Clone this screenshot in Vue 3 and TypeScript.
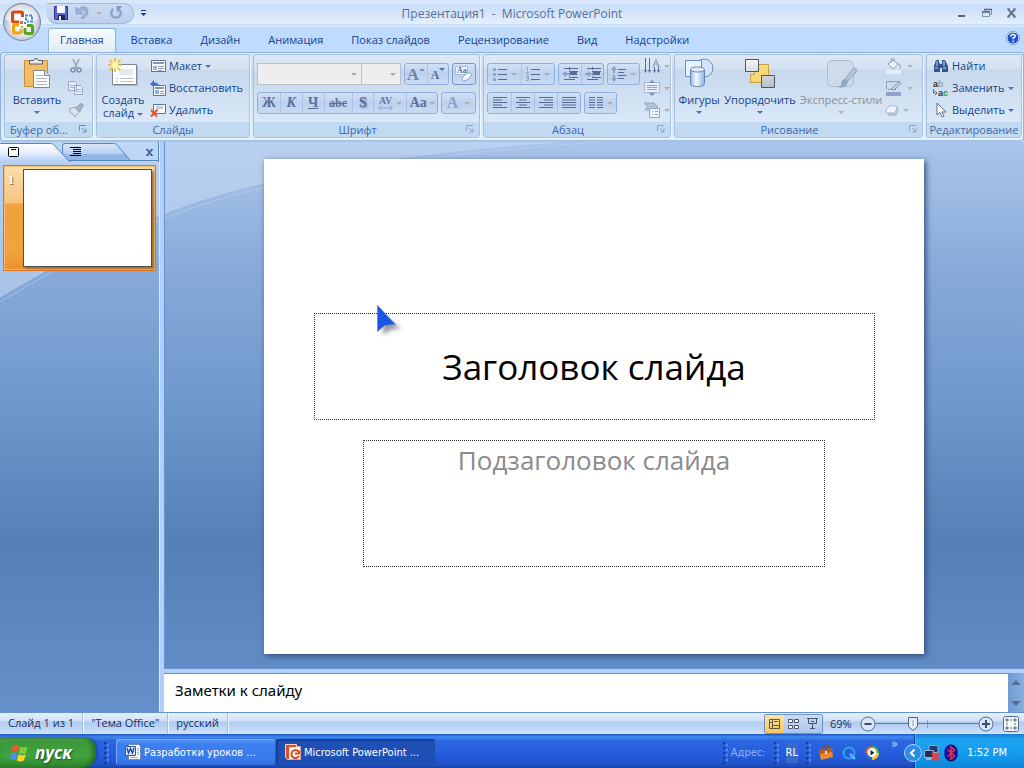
<script setup lang="ts">
import { ref } from 'vue'

const tabs: string[] = ['Главная', 'Вставка', 'Дизайн', 'Анимация', 'Показ слайдов', 'Рецензирование', 'Вид', 'Надстройки']
const activeTab = ref('Главная')
const notes = ref('Заметки к слайду')
const zoom = ref(69)
</script>

<template>
  <div class="app">
    <header class="titlebar">
      <div class="qat">
        <button class="bare" aria-label="Сохранить">
          <svg width="14" height="14" viewBox="0 0 14 14">
            <path d="M0 0h13l1 1v13H1l-1-1z" fill="#5a62cc" />
            <path d="M.5 .5h13v13H1.500l-1-1z" fill="none" stroke="#2c2f8c" />
            <path d="M3 0h8v7H3z" fill="#f4f7ff" /><path d="M4 9h7v5H4z" fill="#20225e" /><path d="M5 10h2v4H5z" fill="#e8ecff" />
          </svg>
        </button>
        <button class="bare" aria-label="Отменить">
          <svg width="14" height="14" viewBox="0 0 14 14"><path d="M1 1v7h7L5.500 5.500Q8 3 10 5T8 10l-2 3q7-2 7-7.500T8 1Q5 1 3.300 3.300z" fill="#9db3d6" stroke="#8199c4" stroke-width=".7" /></svg>
        </button>
        <i class="caret grey"></i>
        <button class="bare redo" aria-label="Повторить">
          <svg width="14" height="14" viewBox="0 0 14 14"><path d="M4.500 3C1 5 1.500 11.500 7 11.500S13 5.500 9.500 3.500" fill="none" stroke="#8da5cd" stroke-width="2.400" /><path d="M7.500 0H13L8 7z" fill="#8199c4" /></svg>
        </button>
      </div>
      <button class="bare custom" aria-label="Настройка панели">
        <svg width="7" height="6" viewBox="0 0 7 6"><path d="M1 .5h5" stroke="#1e3f7a" /><path d="M.5 3h6L3.500 6z" fill="#1e3f7a" /></svg>
      </button>
      <h1>Презентация1&nbsp; - &nbsp;Microsoft PowerPoint</h1>
      <div class="winbtns">
        <button class="bare" aria-label="Свернуть"><svg width="10" height="10" viewBox="0 0 10 10"><path d="M1 7h7v2H1z" fill="#56667f" /></svg></button>
        <button class="bare" aria-label="Восстановить окно"><svg width="10" height="10" viewBox="0 0 10 10"><path d="M2.500 3V1.500h7v5H8M.5 3.500h7v5h-7z" fill="none" stroke="#7f93b1" /><path d="M2 1.500h8M0 4h8" stroke="#56667f" stroke-width="1.500" /></svg></button>
        <button class="bare" aria-label="Закрыть"><svg width="10" height="10" viewBox="0 0 10 10"><path d="M1 1l7 8M8 1L1 9" stroke="#637793" stroke-width="2" /><path d="M0 1h3M6 1h3M0 9h3M6 9h3" stroke="#637793" /></svg></button>
      </div>
    </header>

    <button class="bare orb" aria-label="Кнопка Office">
      <svg width="40" height="40" viewBox="0 0 40 40">
        <defs>
          <radialGradient id="orb" cx=".5" cy=".55" r=".5"><stop offset="0" stop-color="#fff" /><stop offset=".6" stop-color="#e9eef5" /><stop offset="1" stop-color="#aab6c8" /></radialGradient>
        </defs>
        <circle cx="20" cy="20" r="18.500" fill="url(#orb)" stroke="#7c8ba5" />
        <path d="M3.500 18a16.500 15.500 0 0 1 33 0q-16 4-33 0z" fill="#fff" opacity=".55" />
        <g fill="none">
          <path d="M17 20h-5q-1.500 0-1.500-1.500v-7q0-1.500 1.500-1.500h7q1.500 0 1.500 1.500V15" stroke="#d9480f" stroke-width="3" />
          <path d="M24 18.500v-5h6v6h-5" stroke="#3f8ede" stroke-width="2" stroke-dasharray="3 1" />
          <path d="M17 23h-4q-1.500 0-1.500 1.500v5q0 1.500 1.500 1.500h4.500q1.500 0 1.500-1.500V27" stroke="#f2a60c" stroke-width="3" />
          <path d="M23 26v4q0 1.500 1.500 1.500H29q1.500 0 1.500-1.500v-5q0-1.500-1.500-1.500h-4" stroke="#58a21d" stroke-width="3" />
        </g>
        <path d="M18 19h3v3h-3z" fill="#e26b1d" /><path d="M22 20h2v2h-2z" fill="#3f8ede" /><path d="M19 24h2v2h-2z" fill="#f2a60c" />
      </svg>
    </button>

    <nav class="tabs" role="tablist">
      <button v-for="t in tabs" :key="t" class="tab" :class="{ active: t === activeTab }" role="tab" @click="activeTab = t">{{ t }}</button>
      <button class="bare help" aria-label="Справка">
        <svg width="14" height="14" viewBox="0 0 14 14"><circle cx="7" cy="7" r="6" fill="#1d55cf" stroke="#f2f7ff" /><circle cx="7" cy="7" r="6.600" fill="none" stroke="#7184a6" stroke-width=".7" /><path d="M4.800 5.500Q5 3.500 7 3.500t2.200 1.700Q9.200 6.300 7.200 7v1.300M7.200 9.500V11" fill="none" stroke="#fff" stroke-width="1.500" /></svg>
      </button>
    </nav>

    <section class="ribbon">
      <div class="group clip">
        <div class="body">
          <button class="big">
            <svg width="32" height="32" viewBox="0 0 32 32">
              <path d="M3.500 2.500h23v26h-23z" fill="#f2bd64" stroke="#c68f3a" />
              <path d="M8.500 6V2.500h4q.5-2 2.500-2t2.500 2h4V6z" fill="#e4e7ec" stroke="#54606f" />
              <path d="M12.500 12.500h11l5 5v12h-16z" fill="#fff" stroke="#7c8795" /><path d="M23.500 12.500v5h5" fill="#dbe3ef" stroke="#7c8795" />
              <path d="M15 17.500h7M15 20.500h11M15 23.500h11M15 26.500h11" stroke="#a9b5c8" />
            </svg>
            <span>Вставить</span><i class="caret"></i>
          </button>
          <div class="stack">
            <button class="row" aria-label="Вырезать"><svg width="16" height="16" viewBox="0 0 16 16"><path d="M5 1l4 9M11 1L7 10" stroke="#9aa9c0" stroke-width="1.700" /><circle cx="5" cy="12" r="2" fill="none" stroke="#8092b3" stroke-width="1.600" /><circle cx="11" cy="12" r="2" fill="none" stroke="#8092b3" stroke-width="1.600" /></svg></button>
            <button class="row" aria-label="Копировать"><svg width="16" height="16" viewBox="0 0 16 16"><path d="M.5 1.500h6l2 2v7h-8zM6.500 5.500h6l2 2v7h-8z" fill="#e6edf7" stroke="#98a8c2" /><path d="M2 5.500h4M2 7.500h4M8 9.500h5M8 11.500h5" stroke="#a8b7cf" /></svg></button>
            <button class="row" aria-label="Формат по образцу"><svg width="16" height="16" viewBox="0 0 16 16"><path d="M1 7l6-2 4 5-4 5-2-3-2-1z" fill="#dfe4ea" stroke="#9aa5b5" /><path d="M7.500 6L13 1.500 15.500 3l-4 7z" fill="#a9b3c2" stroke="#8f9cb0" /></svg></button>
          </div>
        </div>
        <footer>Буфер об...<svg class="launch" width="8" height="8" viewBox="0 0 8 8"><path d="M.5 6V.5H7M3 3l3.500 3.500M7 3.500V7H3.500" fill="none" stroke="#6f8bb5" /></svg></footer>
      </div>

      <div class="group slides">
        <div class="body">
          <button class="big">
            <svg width="32" height="32" viewBox="0 0 32 32">
              <path d="M5.500 6.500h24v20h-24z" fill="#fff" stroke="#7c8795" /><path d="M6 27.500h24.500V8" fill="none" stroke="#a9b5c8" />
              <path d="M12 11h14v6H12z" fill="#e4e8ef" /><path d="M9 20.500h2M13 20.500h14M9 23.500h2M13 23.500h14" stroke="#b8c2d2" />
              <path d="M8 0v14M1 7h14M2.500 2l11 10.500M13.500 2L2.500 12.500" stroke="#f3b81c" stroke-width="1.700" /><circle cx="8" cy="7" r="3.500" fill="#fff6a8" />
            </svg>
            <span>Создать<br />слайд <i class="caret"></i></span>
          </button>
          <div class="stack">
            <button class="row"><svg width="16" height="16" viewBox="0 0 16 16"><path d="M1.500 2.500h14v11h-14z" fill="#f7faff" stroke="#5e7291" /><path d="M3 4h11v2H3z" fill="#8595ae" /><path d="M3 8h4v4H3z" fill="#a5b2c6" /><path d="M8 8.500h6M8 10.500h6M8 12.500h4" stroke="#8fa0bb" /></svg>Макет<i class="caret"></i></button>
            <button class="row"><svg width="16" height="16" viewBox="0 0 16 16"><path d="M3.500 5.500h12v10h-12z" fill="#f7faff" stroke="#5e7291" /><path d="M5 7h9v2H5z" fill="#8595ae" /><path d="M5 10h4v4H5z" fill="#8fb0de" /><path d="M10 11.500h4M10 13.500h4" stroke="#8fa0bb" /><path d="M0 4l4-4v2.500q5 0 5 4-2-2-5-1.500V7z" fill="#3a6fd0" /></svg>Восстановить</button>
            <button class="row"><svg width="16" height="16" viewBox="0 0 16 16"><path d="M3.500 2.500h12v9h-12z" fill="#f7faff" stroke="#5e7291" /><path d="M6 4h7v3H6z" fill="#c3cddc" /><path d="M1 8l6 6.500M7.500 7.500L1 14.500" stroke="#e8502a" stroke-width="2" /></svg>Удалить</button>
          </div>
        </div>
        <footer>Слайды</footer>
      </div>

      <div class="group font">
        <div class="body rows">
          <div class="line">
            <div class="combos">
              <select class="family" aria-label="Шрифт" disabled><option></option></select>
              <select class="size" aria-label="Размер шрифта" disabled><option></option></select>
            </div>
            <div class="set">
              <button class="w22 serif a1" aria-label="Увеличить размер">A<i class="up"></i></button>
              <button class="w22 serif a2" aria-label="Уменьшить размер">A<i class="caret"></i></button>
            </div>
            <div class="set strong">
              <button class="w22" aria-label="Очистить формат"><svg width="18" height="18" viewBox="0 0 18 18"><path d="M.5 1.500h12v8H.5z" fill="#eef4fc" stroke="#a8bbd8" /><text x="2" y="8" font-size="8" font-family="Liberation Serif, serif" font-weight="bold" fill="#5c7096">Aa</text><path d="M7 13l5-5q4-1 5 2l-5 5q-5 2-5-2z" fill="#f7f8fb" stroke="#93a3bd" /></svg></button>
            </div>
          </div>
          <div class="line">
            <div class="set">
              <button class="w22 serif">Ж</button><button class="w22 serif ital">К</button><button class="w22 serif und">Ч</button>
              <button class="w28 serif strike">abc</button><button class="w22 serif shade">S</button>
              <button class="w32 serif av"><svg width="16" height="16" viewBox="0 0 16 16"><text x="1" y="9" font-size="10" font-family="Liberation Serif, serif" fill="#667aa5">AV</text><path d="M3 10.500L.5 13 3 15.500M12 10.500l2.500 2.500-2.500 2.500M1 13h13" fill="none" stroke="#8ba5d0" /></svg><i class="caret tan"></i></button>
              <button class="w30 serif">Aa<i class="caret tan"></i></button>
            </div>
            <div class="set"><button class="w32 serif colr">A<i class="caret tan"></i></button></div>
          </div>
        </div>
        <footer>Шрифт<svg class="launch" width="8" height="8" viewBox="0 0 8 8"><path d="M.5 6V.5H7M3 3l3.500 3.500M7 3.500V7H3.500" fill="none" stroke="#8ea3c4" /></svg></footer>
      </div>

      <div class="group para">
        <div class="body">
          <div class="rows">
            <div class="line">
              <div class="set">
                <button class="w32" aria-label="Маркеры"><svg width="14" height="14" viewBox="0 0 14 14"><path d="M5 2.500h9M5 7.500h9M5 12.500h9" stroke="#5a6c96" /><path d="M0 1h3v3H0zM0 6h3v3H0zM0 11h3v3H0z" fill="#94a4c4" /></svg><i class="caret tan"></i></button>
                <button class="w32" aria-label="Нумерация"><svg width="14" height="14" viewBox="0 0 14 14"><path d="M5 2.500h9M5 7.500h9M5 12.500h9" stroke="#5a6c96" /><path d="M0 .5h1.500v3.500M0 5.500h2.500L.5 9H3M0 10.500h2.500v3H0M1 12h1.500" fill="none" stroke="#94a4c4" /></svg><i class="caret tan"></i></button>
              </div>
              <div class="set">
                <button class="w22" aria-label="Уменьшить отступ"><svg width="16" height="14" viewBox="0 0 16 14"><path d="M2 1.500h14M8 4.500h8M8 7.500h5M8 10.500h8M2 12.500h11" stroke="#5a6c96" /><path d="M8 5h7v3H8z" fill="#5a6c96" /><path d="M0 7l4-3v2h3v2H4v2z" fill="#8d9fc2" /><path d="M7.500 0v14" stroke="#5a6c96" stroke-dasharray="1 1" /></svg></button>
                <button class="w22" aria-label="Увеличить отступ"><svg width="16" height="14" viewBox="0 0 16 14"><path d="M2 1.500h14M8 4.500h8M8 7.500h5M8 10.500h8M2 12.500h11" stroke="#5a6c96" /><path d="M8 5h7v3H8z" fill="#5a6c96" /><path d="M7 7L3 4v2H0v2h3v2z" fill="#8d9fc2" /><path d="M7.500 0v14" stroke="#5a6c96" stroke-dasharray="1 1" /></svg></button>
              </div>
              <div class="set"><button class="w30" aria-label="Междустрочный интервал"><svg width="15" height="16" viewBox="0 0 15 16"><path d="M7 3.500h8M7 6.500h6M7 9.500h8M7 12.500h6" stroke="#5a6c96" /><path d="M3 0L0 4h2v3h2V4h2zM3 16l-3-4h2V9h2v3h2z" fill="#8d9fc2" /></svg><i class="caret tan"></i></button></div>
            </div>
            <div class="line">
              <div class="set">
                <button class="w23" aria-label="По левому краю"><svg width="14" height="12" viewBox="0 0 14 12"><path d="M0 .5h14M0 3h9M0 5.500h14M0 8h9M0 10.500h14" stroke="#5a6c96" /></svg></button>
                <button class="w23" aria-label="По центру"><svg width="14" height="12" viewBox="0 0 14 12"><path d="M0 .5h14M3 3h8M0 5.500h14M3 8h8M0 10.500h14" stroke="#5a6c96" /></svg></button>
                <button class="w23" aria-label="По правому краю"><svg width="14" height="12" viewBox="0 0 14 12"><path d="M0 .5h14M5 3h9M0 5.500h14M5 8h9M0 10.500h14" stroke="#5a6c96" /></svg></button>
                <button class="w23" aria-label="По ширине"><svg width="14" height="12" viewBox="0 0 14 12"><path d="M0 .5h14M0 3h14M0 5.500h14M0 8h14M0 10.500h14" stroke="#5a6c96" /></svg></button>
              </div>
              <div class="set"><button class="w30" aria-label="Колонки"><svg width="14" height="12" viewBox="0 0 14 12"><path d="M0 .5h6M8 .5h6M0 3h6M8 3h6M0 5.500h6M8 5.500h6M0 8h6M8 8h6M0 10.500h6M8 10.500h6" stroke="#5a6c96" /></svg><i class="caret tan"></i></button></div>
            </div>
          </div>
          <div class="stack">
            <button class="row tight" aria-label="Направление текста"><svg width="16" height="16" viewBox="0 0 16 16"><path d="M1.500 0v14M5.500 0v14M10.500 9v5M14.500 9v5" stroke="#5a6c96" /><path d="M0 12h3l-1.500 3zM4 12h3l-1.500 3zM9 12h3l-1.500 3zM13 12h3l-1.500 3z" fill="#5a6c96" /><path d="M8.500 8h2M13 8h3M9.500 8L12 1.500 14.500 8M10.500 6h3.500" fill="none" stroke="#8295bd" /></svg><i class="caret tan"></i></button>
            <button class="row tight" aria-label="Выровнять текст"><svg width="16" height="16" viewBox="0 0 16 16"><path d="M.5 2.500h15v10H.5z" fill="#e9f0fa" stroke="#a3b4d0" /><path d="M3 5.500h10M3 7.500h10M3 9.500h10" stroke="#8fa2c3" /><path d="M8 0l3 3H5zM8 16l3-3H5z" fill="#7e93ba" /></svg><i class="caret tan"></i></button>
            <button class="row tight" aria-label="Преобразовать в SmartArt"><svg width="16" height="16" viewBox="0 0 16 16"><path d="M0 1h10l4 4-3 3H1l3-3.500z" fill="#b4c2d9" stroke="#93a5c2" /><path d="M5.500 6.500h10v9h-10z" fill="#edf3fb" stroke="#93a5c2" /><path d="M8 9.500h1M11 9.500h3M8 12.500h1M11 12.500h3" stroke="#8fa2c3" /></svg><i class="caret tan"></i></button>
          </div>
        </div>
        <footer>Абзац<svg class="launch" width="8" height="8" viewBox="0 0 8 8"><path d="M.5 6V.5H7M3 3l3.500 3.500M7 3.500V7H3.500" fill="none" stroke="#8ea3c4" /></svg></footer>
      </div>

      <div class="group draw">
        <div class="body">
          <button class="big">
            <svg width="32" height="32" viewBox="0 0 32 32">
              <defs><linearGradient id="cyl"><stop offset="0" stop-color="#8fb7ea" /><stop offset=".4" stop-color="#f4f9ff" /><stop offset="1" stop-color="#8cb4e6" /></linearGradient></defs>
              <circle cx="21" cy="10" r="9" fill="#d4e4f8" stroke="#6d8fc0" /><path d="M2.500 2.500h16v16h-16z" fill="#e8f1fc" stroke="#6d8fc0" />
              <path d="M7.500 11.500v14q0 3 7 3t7-3v-14z" fill="url(#cyl)" stroke="#6487bb" /><ellipse cx="14.500" cy="11.500" rx="7" ry="2.500" fill="#e3effd" stroke="#6487bb" />
            </svg>
            <span>Фигуры</span><i class="caret"></i>
          </button>
          <button class="big wide">
            <svg width="32" height="32" viewBox="0 0 32 32">
              <defs><linearGradient id="box" x2="0" y2="1"><stop offset="0" stop-color="#f4f5f6" /><stop offset="1" stop-color="#b9bfc7" /></linearGradient></defs>
              <path d="M10.500 6.500h14v18h-18v-8h4z" fill="#f7d878" stroke="#c9a13c" />
              <path d="M1.500 1.500h13v12h-13zM17.500 17.500h13v12h-13z" fill="url(#box)" stroke="#4d5866" />
            </svg>
            <span>Упорядочить</span><i class="caret"></i>
          </button>
          <button class="big wider" disabled>
            <svg width="32" height="32" viewBox="0 0 32 32">
              <rect x="2.500" y="2.500" width="26" height="26" rx="5" fill="#cfdbeb" stroke="#a9b9d0" />
              <path d="M31 11q1 1 0 3l-8 9-3-2 7-9q2-3 4-1z" fill="#b7c3d5" stroke="#94a4bb" /><path d="M20 21l3 2q0 7-10 7 4-2 3-5 1-4 4-4z" fill="#94a6c0" />
            </svg>
            <span>Экспресс-стили</span><i class="caret grey"></i>
          </button>
          <div class="stack">
            <button class="row tight" aria-label="Заливка фигуры"><svg width="18" height="16" viewBox="0 0 18 16"><path d="M3 6l5-4 5 4-5 5z" fill="#eef3fa" stroke="#8c9fbe" /><path d="M6 5V1q2-2 3 0v3M13 6q3 0 2 5" fill="none" stroke="#8c9fbe" /><path d="M1 12h15v4H1z" fill="#e8eef7" /></svg><i class="caret grey"></i></button>
            <button class="row tight" aria-label="Контур фигуры"><svg width="18" height="16" viewBox="0 0 18 16"><path d="M1.500 9.500v-8h13M3 9.500h8" fill="none" stroke="#8c9fbe" /><path d="M6 9l8-7 2 1-7 7z" fill="#c9d5e8" stroke="#8193b2" /><path d="M1 12h15v4H1z" fill="#8fa3ca" /></svg><i class="caret grey"></i></button>
            <button class="row tight" aria-label="Эффекты для фигур"><svg width="14" height="16" viewBox="0 0 14 16"><path d="M2 10l3-6h8l1 4-3 6H3z" fill="#b5c3da" /><path d="M1 8l3-4h6q2 0 2 2l-2 5H2q-1 0-1-3z" fill="#f0f4fa" stroke="#aab9d2" /></svg><i class="caret grey"></i></button>
          </div>
        </div>
        <footer>Рисование<svg class="launch" width="8" height="8" viewBox="0 0 8 8"><path d="M.5 6V.5H7M3 3l3.500 3.500M7 3.500V7H3.500" fill="none" stroke="#8ea3c4" /></svg></footer>
      </div>

      <div class="group edit">
        <div class="body">
          <div class="stack">
            <button class="row"><svg width="16" height="16" viewBox="0 0 16 16"><path d="M3 2h3v3h1v9H1V8zM9 2h3l3 6v6H9V5z" fill="#34558f" /><path d="M6 6h3v4H6z" fill="#34558f" /><path d="M2 10h3M10 10h3M4 3v5M11 3v5" stroke="#c7d9f5" /></svg>Найти</button>
            <button class="row"><svg width="16" height="20" viewBox="0 0 16 20" font-size="9" font-weight="bold" font-family="Liberation Sans, sans-serif"><text x="0" y="9" fill="#333">a<tspan fill="#97a4b8">b</tspan></text><text x="5" y="18" fill="#333">a<tspan fill="#1b9c38">c</tspan></text><path d="M.5 11v4h2M2 13l2 2-2 2" fill="none" stroke="#4468a8" /></svg>Заменить<i class="caret end"></i></button>
            <button class="row"><svg width="16" height="16" viewBox="0 0 16 16"><path d="M4 1v12l3-2.500 2 4.500 2-1-2-4h4z" fill="#fff" stroke="#5c6f8f" /></svg>Выделить<i class="caret end"></i></button>
          </div>
        </div>
        <footer>Редактирование</footer>
      </div>
    </section>

    <main class="work">
      <svg class="swoosh" viewBox="0 0 1024 160" preserveAspectRatio="xMinYMin slice" aria-hidden="true">
        <path d="M0 0H560Q300 18 165 71T0 155z" fill="#c4d8f2" opacity="0" />
        <path d="M0 0H560Q300 18 165 71Q75 110 0 155z" fill="#c8dbf4" opacity=".55" />
        <path d="M560 0Q300 18 165 71Q75 110 0 155M600 0Q305 20 165 76Q75 114 0 160" fill="none" stroke="#c3d8f4" stroke-opacity=".5" />
      </svg>
      <aside class="pane">
        <div class="panetabs">
          <svg class="paneshape" width="159" height="19" viewBox="0 0 159 19" aria-hidden="true">
            <defs>
              <linearGradient id="t1" x2="0" y2="1"><stop offset="0" stop-color="#fff" /><stop offset=".5" stop-color="#e2edfc" /><stop offset="1" stop-color="#a9cbfa" /></linearGradient>
              <linearGradient id="t2" x2="0" y2="1"><stop offset="0" stop-color="#dbe7f8" /><stop offset=".6" stop-color="#b7cff0" /><stop offset=".62" stop-color="#96b8e6" /><stop offset="1" stop-color="#91b4e4" /></linearGradient>
            </defs>
            <path d="M62.500 17.500V3q0-2.500 2-2.500h49q2 0 3 1l14 16z" fill="url(#t2)" stroke="#5384c4" />
            <path d="M-.5 20V1q0-.5 1-.5h50q2 0 3 1l15 16H69L72 20z" fill="url(#t1)" stroke="#5384c4" />
            <path d="M69 17.500h90" stroke="#5384c4" />
          </svg>
          <button class="bare ptab" aria-label="Слайды"><svg width="11" height="10" viewBox="0 0 11 10"><rect x=".5" y=".5" width="10" height="9" rx="1" fill="#fff" stroke="#000" /><path d="M3 2.500h5" stroke="#000" /></svg></button>
          <button class="bare ptab" aria-label="Структура"><svg width="11" height="10" viewBox="0 0 11 10"><path d="M0 .5h11M3 2.500h8M3 4.500h8M3 6.500h8M0 8.500h11" stroke="#000" /></svg></button>
          <button class="bare pclose" aria-label="Закрыть область"><svg width="7" height="7" viewBox="0 0 7 7"><path d="M1 .5l5 6M6 .5l-5 6" stroke="#38659f" stroke-width="1.700" /><path d="M0 .5h2.500M4.500 .5H7M0 6.500h2.500M4.500 6.500H7" stroke="#38659f" /></svg></button>
        </div>
        <button class="thumb"><b>1</b><span class="mini"></span></button>
      </aside>
      <div class="editor">
        <div class="stage">
          <article class="slide">
            <div class="holder title">Заголовок слайда</div>
            <div class="holder sub">Подзаголовок слайда</div>
            <svg class="cursor" width="32" height="36" viewBox="0 0 32 36" aria-hidden="true">
              <defs><filter id="soft" x="-50%" y="-50%" width="200%" height="200%"><feGaussianBlur stdDeviation="2" /></filter></defs>
              <path d="M7 31V12l18 12-11 2z" fill="#333" opacity=".5" filter="url(#soft)" />
              <path d="M1.500 1.500l18 19-11 1-7 6z" fill="#1656e0" stroke="#6f86e0" />
            </svg>
          </article>
        </div>
        <div class="notes">
          <textarea v-model="notes" aria-label="Заметки"></textarea>
          <div class="scroll"><i class="up"></i><i class="caret"></i></div>
        </div>
      </div>
    </main>

    <footer class="status">
      <span class="cell">Слайд 1 из 1</span><span class="cell">"Тема Office"</span><span class="cell">русский</span>
      <div class="views">
        <button class="on" aria-label="Обычный"><svg width="11" height="10" viewBox="0 0 11 10"><path d="M.5 .5h10v9H.5zM3.500 1v8M4 6.500h6M1 3.500h2M5 2.500h4" fill="none" stroke="#5d564c" /></svg></button>
        <button aria-label="Сортировщик"><svg width="11" height="10" viewBox="0 0 11 10"><path d="M.5 .5h4v3h-4zM6.500 .5h4v3h-4zM.5 6.500h4v3h-4zM6.500 6.500h4v3h-4z" fill="#f4f8ff" stroke="#4a5563" /></svg></button>
        <button aria-label="Показ"><svg width="11" height="11" viewBox="0 0 11 11"><path d="M0 .5h11M1.500 1v4.500h8V1M5.500 6v4M3 10.500h5M4 3.500h3" fill="none" stroke="#4a5563" /></svg></button>
      </div>
      <label class="pct" for="zoom">{{ zoom }}%</label>
      <button class="bare" aria-label="Уменьшить"><svg width="16" height="16" viewBox="0 0 16 16"><circle cx="8" cy="8" r="7" fill="#d7e5f8" stroke="#54698c" /><path d="M4.500 8h7" stroke="#3c4c66" stroke-width="2" /></svg></button>
      <input id="zoom" v-model.number="zoom" type="range" min="10" max="180" />
      <button class="bare" aria-label="Увеличить"><svg width="16" height="16" viewBox="0 0 16 16"><circle cx="8" cy="8" r="7" fill="#d7e5f8" stroke="#54698c" /><path d="M4 8h8M8 4v8" stroke="#3c4c66" stroke-width="2" /></svg></button>
      <button class="bare fit" aria-label="Вписать"><svg width="16" height="16" viewBox="0 0 16 16"><rect x=".5" y=".5" width="15" height="15" rx="2" fill="#f5f8fc" stroke="#54698c" /><path d="M4 2v4M2 4h4M12 2v4M10 4h4M4 10v4M2 12h4M12 10v4M10 12h4M7 4h2M7 12h2M4 7v2M12 7v2" stroke="#54657f" /></svg></button>
    </footer>

    <div class="taskbar">
      <button class="start">
        <svg width="20" height="18" viewBox="0 0 20 18"><path d="M3 2q3-2 6 0L7.500 8.500q-3-2-6.300 0z" fill="#f0592a" /><path d="M10 2.500q4 2 7.500 0L16 9q-3.500 2-7 0z" fill="#7fcb3c" /><path d="M1 9.700q3-2 6.200 0L5.700 16q-3-2-5.700 0z" fill="#4d8ff0" /><path d="M8.500 10.200q3.500 2 7.200 0L14 16.500q-4 2-7.200 0z" fill="#fbd22e" /></svg>
        <span>пуск</span>
      </button>
      <i class="grip"></i>
      <button class="task"><svg width="16" height="16" viewBox="0 0 16 16"><path d="M3.500 .5h10l2 2v13h-12z" fill="#fff" stroke="#7189c0" /><path d="M5 13.500h8M12 4.500h2M12 6.500h2M12 8.500h2M12 10.500h2" stroke="#92a8d6" /><path d="M.5 2.500h10v9H.5z" fill="#dfe9fb" stroke="#2f58ab" /><path d="M2 4l1.500 5 2-4.500 2 4.500L9 4" fill="none" stroke="#1d469c" stroke-width="1.400" /></svg>Разработки уроков ...</button>
      <button class="task pressed"><svg width="16" height="16" viewBox="0 0 16 16"><path d="M3.500 2.500h12v13h-12z" fill="#fff" stroke="#e2a48c" /><path d="M.5 .5h11v3h-7v12h-2l-2-2z" fill="#db5026" stroke="#f7d8ca" /><path d="M13.500 7.500A4 4 0 1 0 14 12M10 9.500h4v-3" fill="none" stroke="#db4a20" stroke-width="2" /></svg>Microsoft PowerPoint ...</button>
      <i class="grip push"></i>
      <span class="addr">Адрес:</span>
      <i class="grip"></i>
      <span class="lang">RL</span>
      <i class="grip"></i>
      <div class="quick">
        <svg width="16" height="16" viewBox="0 0 16 16"><path d="M1 5l13-2 1 9-12 3z" fill="#e8892a" /><path d="M1 5l13-2v4L2 9z" fill="#b4591c" /><path d="M5 4q0-3 3-3t3 2" fill="none" stroke="#8c4e20" stroke-width="1.500" /><path d="M7 6h2v3H7z" fill="#ffe69c" /></svg>
        <svg width="16" height="16" viewBox="0 0 16 16"><circle cx="8" cy="8" r="5.500" fill="none" stroke="#2fa4ea" stroke-width="2" /><path d="M9 9l5 5" stroke="#54bdf5" stroke-width="2.500" /></svg>
        <svg width="16" height="16" viewBox="0 0 16 16"><path d="M8 8V1a7 7 0 0 0-7 7z" fill="#ee5a23" /><path d="M8 8h7a7 7 0 0 0-7-7z" fill="#5db13d" /><path d="M8 8H1a7 7 0 0 0 7 7z" fill="#2b66d8" /><path d="M8 8v7a7 7 0 0 0 7-7z" fill="#f5c62a" /><circle cx="8" cy="7.500" r="4.500" fill="#f7fafe" /><path d="M6.500 5v5.500l4-2.700z" fill="#20262e" /></svg>
        <span class="more">»</span>
      </div>
      <div class="tray">
        <button class="bare chev" aria-label="Показать значки"><svg width="18" height="18" viewBox="0 0 18 18"><circle cx="9" cy="9" r="8.500" fill="#2d8be8" stroke="#a9d6fb" /><path d="M10.500 5.500L7 9l3.500 3.500" fill="none" stroke="#fff" stroke-width="2" /></svg></button>
        <svg width="18" height="16" viewBox="0 0 18 16"><path d="M5 .5h9v7H5z" fill="#273a63" stroke="#8ba6d8" /><path d="M.5 5.500h9v7h-9z" fill="#1f3158" stroke="#98b3e2" /><path d="M2 14h7" stroke="#b2c8ee" stroke-width="1.500" /><path d="M8 8l7 7M15 8l-7 7" stroke="#ee3d3a" stroke-width="2.500" /></svg>
        <svg width="14" height="18" viewBox="0 0 14 18"><rect x="1" y="1" width="12" height="16" rx="6" fill="#1010b8" stroke="#050560" /><path d="M3.500 5.500l7 6.500L7 15V3l3.500 3-7 6.500" fill="none" stroke="#f03030" stroke-width="1.500" /></svg>
        <time>1:52 PM</time>
      </div>
    </div>
  </div>
</template>

<style>
html, body { margin: 0; }
</style>

<style scoped>
* { box-sizing: border-box; }
.app { position: relative; display: flex; flex-direction: column; height: 100vh; overflow: hidden; background: #bfdbff; font-family: "Open Sans", "Noto Sans", sans-serif; font-size: 11px; color: #15428b; }
button, select, textarea { font: inherit; color: inherit; }
button { cursor: default; white-space: nowrap; }
svg { display: block; flex: none; }
.bare { display: flex; align-items: center; justify-content: center; padding: 0; border: 0; background: none; }
.caret, .up { flex: none; display: inline-block; width: 0; height: 0; border: 3px solid transparent; border-top-color: #4a74b0; border-bottom: 0; }
.up { border-top: 0; border-bottom: 3px solid #7b90b8; }
.caret.grey { border-top-color: #b0b4bb; }
.caret.tan { border-top-color: #b3ab9f; }

.titlebar { flex: none; position: relative; display: flex; align-items: center; height: 27px; padding-left: 46px; background: linear-gradient(#d8e7fb 0, #d6e6fb 4px, #c9ddf7 5px, #e3effd 24px, #a9cdf3 25px, #eaf4ff 26px); border-bottom: 1px solid #d6e8fc; }
.qat { display: flex; align-items: center; gap: 7px; width: 88px; height: 21px; padding-left: 7px; border: 1px solid #9fb8dd; border-left-color: transparent; border-radius: 2px 11px 11px 12px; background: linear-gradient(#cbdcf3, #bcd0ec); }
.custom { margin-left: 6px; }
h1 { position: absolute; left: 50%; transform: translateX(-50%); margin: 1px 0 0; font-size: 12px; font-weight: 400; line-height: 20px; white-space: nowrap; color: #5a6f96; }
.winbtns { display: flex; gap: 15px; margin-left: auto; padding-right: 7px; }
.orb { position: absolute; left: 2px; top: 2px; z-index: 3; }

.tabs { flex: none; display: flex; align-items: stretch; height: 25px; padding: 1px 4px 0 48px; }
.tab { padding: 0 13px; border: 1px solid transparent; border-bottom: 0; background: none; line-height: 20px; padding-bottom: 2px; }
.tab.active { padding: 0 11px 2px; margin-right: 1px; border-color: #8db2e3; border-radius: 3px 3px 0 0; background: linear-gradient(#f6faff, #e0ebf8); box-shadow: inset 1px 1px #fff, 1px 0 2px #9fe0f2; }
.help { margin-left: auto; margin-bottom: 4px; }

.ribbon { flex: none; display: flex; gap: 3px; height: 90px; padding: 1px 1px 2px 3px; border: 1px solid #8db2e3; border-bottom: 2px solid #a3c4e6; border-radius: 4px; background: linear-gradient(#dde8f5, #c8d8ed 20px, #d8eafb 70px, #d3f3fc); }
.group { display: flex; flex-direction: column; flex: none; border: 1px solid #a9c1dd; border-radius: 3px; overflow: hidden; background: linear-gradient(#dde8f5 0, #d4e1f2 14px, #c7d8ed 15px, #dae8f7 67px); box-shadow: 1px 1px #eef6ff; }
.clip { width: 89px; } .slides { width: 154px; } .font { width: 227px; } .para { width: 188px; } .draw { width: 249px; } .edit { flex: 1 0 96px; }
.body { flex: 1; display: flex; }
.group footer { position: relative; height: 15px; line-height: 15px; text-align: center; background: #c1d9f1; color: #3e6aaa; }
.clip footer { text-align: left; padding-left: 5px; }
.font footer, .para footer, .draw footer { padding-right: 18px; }
.launch { position: absolute; right: 5px; top: 3px; }
.big { display: flex; flex-direction: column; align-items: center; padding: 3px 0 0; width: 46px; border: 0; background: none; line-height: 13px; }
.big svg { margin-bottom: 3px; }
.big > .caret { margin-top: 5px; }
.big span .caret { vertical-align: middle; }
.big:disabled { color: #8c8f96; }
.clip .big { width: 60px; padding-left: 4px; }
.slides .big { width: 50px; padding-left: 2px; }
.draw .body { padding-left: 1px; }
.wide { width: 76px; } .wider { width: 86px; }
.stack { display: flex; flex-direction: column; flex: 1; }
.row { display: flex; align-items: center; gap: 3px; height: 22px; padding: 0 3px; border: 0; background: none; line-height: 20px; }
.edit .row { padding: 0 7px 0 6px; }
.row .end { margin-left: auto; }
.tight { gap: 4px; padding: 0 1px; }
.rows { display: flex; flex-direction: column; gap: 7px; padding: 8px 3px 0; }
.line { display: flex; gap: 3px; height: 22px; }
.combos { display: flex; }
select { appearance: none; height: 22px; border: 1px solid #b5bfcd; border-radius: 0; padding: 0; opacity: 1; background: #eeeeee url("data:image/svg+xml,%3Csvg xmlns='http://www.w3.org/2000/svg' width='6' height='3'%3E%3Cpath d='M0 0h6L3 3z' fill='%23a9a9a9'/%3E%3C/svg%3E") no-repeat right 4px center; }
.family { width: 105px; } .size { width: 39px; border-left: 0; }
.set { display: flex; border: 1px solid #8fb0dc; border-radius: 3px; background: linear-gradient(#d2e1f5, #bdd1ee 50%, #c9dbf3); overflow: hidden; }
.set.strong { border-color: #7397c9; }
.set button { display: flex; align-items: center; justify-content: center; gap: 4px; padding: 0; border: 0; border-left: 1px solid #a9c3e7; background: none; line-height: 18px; }
.set button:first-child { border-left: 0; }
.w22 { width: 22px; } .w23 { width: 23px; } .w28 { width: 28px; } .w30 { width: 31px; } .w32 { width: 33px; }
.set .serif { font-family: "Liberation Serif", serif; font-weight: bold; font-size: 14px; color: #5b6f9b; gap: 2px; }
.set .a1 { font-size: 17px; color: #71839f; align-items: flex-end; gap: 0; }
.set .a2 { font-size: 12px; align-items: flex-end; gap: 0; }
.a1 .up, .a2 .caret { align-self: flex-start; margin-top: 4px; }
.set .ital { font-style: italic; } .set .und { text-decoration: underline; }
.set .strike { font-size: 12px; text-decoration: line-through; }
.set .shade { text-shadow: 1px 1px 2px #6b7fa8; }
.set .colr { font-size: 16px; color: #8ba0c8; gap: 6px; }

.work { position: relative; flex: 1; min-height: 0; display: flex; background: linear-gradient(#a9c4ea 0, #9dbbe4 50px, #85a8d8 140px, #6f98cd 260px, #567fb5 400px, #6590cb 100%); }
.swoosh { position: absolute; left: 0; top: 0; width: 1024px; height: 160px; }
.pane { position: relative; flex: none; width: 160px; border-right: 1px solid #d8e9fd; }
.panetabs { position: relative; display: flex; align-items: center; height: 20px; background: #bfd7f7; border-right: 1px solid #5384c4; }
.paneshape { position: absolute; left: 0; top: 1px; }
.ptab { position: relative; justify-content: flex-start; width: 62px; height: 18px; padding-left: 8px; }
.pclose { position: relative; margin-left: auto; padding-right: 5px; }
.thumb { display: flex; width: 153px; height: 106px; margin: 3px 0 0 3px; padding: 3px; border: 1px solid #e0701c; outline: 0; background: linear-gradient(#fbdfae 0, #f6c47e 37px, #f0a33c 38px, #f0a43e 85px, #e8922c); box-shadow: inset 0 0 0 1px #f7bd77; }
.thumb b { flex: none; width: 16px; padding: 3px 0 0 1px; font: bold 12px/16px "Liberation Serif", serif; color: #fff; text-shadow: 1px 1px 1px #8a6a38; text-align: left; }
.mini { flex: 1; height: 98px; border: 1px solid #4d4d4d; background: #fff; box-shadow: 2px 2px 2px #a0703a; }
.editor { position: relative; flex: 1; min-width: 0; display: flex; flex-direction: column; border-left: 4px solid #b0d0fb; box-shadow: inset 1px 0 #6593cf; }
.stage { flex: 1; min-height: 0; display: flex; align-items: center; justify-content: center; padding-top: 2px; }
.slide { position: relative; display: flex; flex-direction: column; align-items: center; gap: 20px; width: 660px; max-width: 77%; aspect-ratio: 4 / 3; padding-top: 154px; background: #fff; box-shadow: 2px 2px 6px #35507c; }
.holder { border: 1px dotted #333; text-align: center; }
.title { width: 85%; height: 107px; line-height: 105px; font-size: 35px; color: #000; }
.sub { width: 70%; height: 127px; line-height: 39px; font-size: 26px; color: #8b8b8b; }
.cursor { position: absolute; left: 112px; top: 145px; }
.notes { flex: none; display: flex; height: 43px; border-top: 4px solid #b0d0fb; background: #fff; box-shadow: inset 0 1px #6593cf, 0 -1px #6593cf; }
textarea { flex: 1; margin: 1px 0 0 1px; padding: 4px 10px; border: 0; outline: 0; resize: none; overflow: hidden; background: #fff; font: 15px/24px "Noto Sans", sans-serif; color: #000; }
.scroll { display: flex; flex-direction: column; align-items: center; justify-content: space-between; width: 16px; padding: 7px 0 6px; background: linear-gradient(90deg, #6f9bd3, #88aedd); }
.scroll i { border-width: 5px; border-top-color: #59709a; }
.scroll .up { border-top: 0; border-color: transparent; border-bottom-color: #59709a; }
.scroll .caret { border-bottom: 0; }

.status { flex: none; display: flex; align-items: center; height: 22px; border-top: 1px solid #6593cf; background: linear-gradient(#e6f0fd, #cfe0f8 8px, #b0cbf0 9px, #c4daf8 18px, #d2e4fb); color: #14305f; }
.cell { height: 100%; line-height: 20px; padding: 0 8px; border-right: 1px solid #a5bee4; box-shadow: 1px 0 #eef5ff; }
.views { display: flex; margin-left: auto; height: 20px; border: 1px solid #6e8fc0; border-radius: 2px; }
.views button { display: flex; align-items: center; justify-content: center; width: 19px; padding: 0; border: 0; background: linear-gradient(#c9dcf6, #aac6ee); }
.views .on { background: linear-gradient(#fbe3a8, #f8c557); }
.pct { width: 37px; padding-left: 7px; }
.status input { appearance: none; width: 102px; height: 15px; margin: 0; background: linear-gradient(#5f7ba8, #5f7ba8) center / 100% 1px no-repeat, linear-gradient(#8ba3c8, #8ba3c8) center / 1px 8px no-repeat; }
.status input::-webkit-slider-thumb { appearance: none; width: 10px; height: 14px; background: url("data:image/svg+xml,%3Csvg xmlns='http://www.w3.org/2000/svg' width='10' height='14'%3E%3Cpath d='M.5.5h9v9L5 13.500.5 9.500z' fill='%23e6eefa' stroke='%234d6488'/%3E%3Cpath d='M5 3v6' stroke='%238fa3c4'/%3E%3C/svg%3E"); }
.fit { margin: 0 5px 0 9px; }

.taskbar { flex: none; display: flex; align-items: stretch; height: 34px; background: linear-gradient(#1f55c0 0, #3f88f0 3px, #2b66e0 7px, #245bdb 22px, #2050c4 31px, #1941a5); color: #fff; font-family: "DejaVu Sans Condensed", "Noto Sans", sans-serif; }
.start { display: flex; align-items: center; gap: 5px; width: 96px; margin-top: 4px; padding: 0 0 0 10px; border: 0; border-radius: 0 10px 14px 0; background: linear-gradient(#5bab57, #3d9a3b 5px, #41a23e 18px, #2f852d); box-shadow: inset -3px 0 5px #246b24, 1px 0 3px #153f8f; color: #fff; }
.start span { font: italic bold 17px/24px "Open Sans", sans-serif; text-shadow: 1px 1px 2px #1c4a1c; }
.grip { flex: none; align-self: center; width: 5px; height: 22px; margin: 3px 7px 0 8px; background: radial-gradient(circle at 1px 1px, #153c9c 1px, transparent 2px) 0 0 / 5px 5px, radial-gradient(circle at 4px 3px, #4b86ee 1px, transparent 2px) 0 0 / 5px 5px; }
.task { display: flex; align-items: center; gap: 3px; flex: 0 1 159px; min-width: 0; margin: 5px 2px 3px 0; padding: 0 9px; border: 0; border-radius: 3px; background: linear-gradient(#5a97f6, #3c7ff0 5px, #3a7aea 20px, #3370de); box-shadow: inset 1px 1px #77abf8; }
.pressed { margin-left: -1px; background: #1e4fb4; box-shadow: inset 1px 1px 2px #12337c; }
.push { margin-left: auto; margin-right: 3px; }
.addr { align-self: center; padding-top: 3px; color: #8fb4f3; }
.lang { align-self: center; height: 20px; margin-top: 3px; line-height: 19px; background: #3a6ac9; }
.quick { display: flex; align-items: center; gap: 7px; padding: 4px 5px 0 0; }
.more { align-self: flex-start; font-size: 13px; line-height: 12px; padding: 0 11px 0 4px; color: #c0d6fb; }
.tray { display: flex; align-items: center; gap: 2px; padding: 3px 17px 0 0; background: linear-gradient(#1a7cd0 0, #1fa3f2 5px, #139ced 20px, #0f85d8); border-left: 1px solid #0d3f9e; box-shadow: inset 1px 0 #3bb8f5; }
.chev { margin-left: -11px; }
time { padding-left: 7px; }
</style>
